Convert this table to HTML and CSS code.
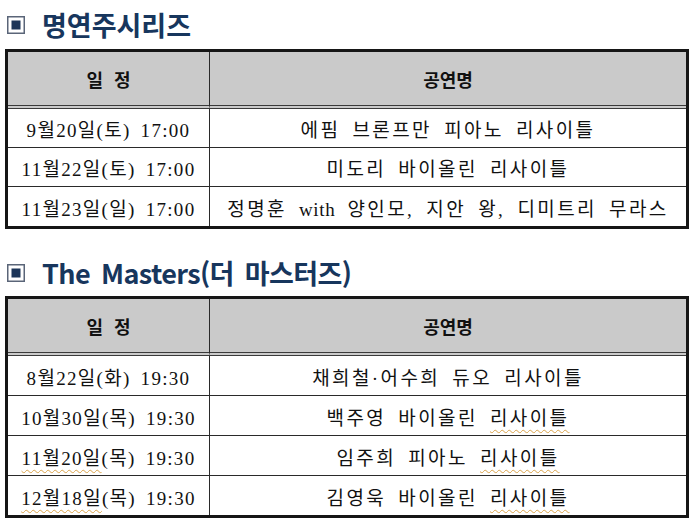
FILE: index.html
```html
<!DOCTYPE html>
<html lang="ko">
<head>
<meta charset="utf-8">
<title>공연 일정</title>
<link rel="stylesheet" href="styles.css">
</head>
<body>
<section class="section">
  <h2 class="title">
    <svg class="title-icon" width="18" height="18" viewBox="0 0 18 18" aria-hidden="true">
      <rect x="0.75" y="0.75" width="16.5" height="16.5" fill="#fff" stroke="#5a6578" stroke-width="1.5"/>
      <rect x="4.5" y="4.5" width="9" height="9" fill="#1d3559"/>
    </svg>
    <span class="title-text">명연주시리즈</span>
  </h2>
  <div class="schedule">
    <div class="cell head first"><span>일 정</span></div>
    <div class="cell head"><span>공연명</span></div>
    <div class="cell first"><span>9월20일(토) 17:00</span></div>
    <div class="cell"><span>에핌 브론프만 피아노 리사이틀</span></div>
    <div class="cell first"><span>11월22일(토) 17:00</span></div>
    <div class="cell"><span>미도리 바이올린 리사이틀</span></div>
    <div class="cell first last"><span>11월23일(일) 17:00</span></div>
    <div class="cell last"><span>정명훈 <span class="latin-word">with</span> 양인모, 지안 왕, 디미트리 무라스</span></div>
  </div>
</section>
<section class="section second">
  <h2 class="title">
    <svg class="title-icon" width="18" height="18" viewBox="0 0 18 18" aria-hidden="true">
      <rect x="0.75" y="0.75" width="16.5" height="16.5" fill="#fff" stroke="#5a6578" stroke-width="1.5"/>
      <rect x="4.5" y="4.5" width="9" height="9" fill="#1d3559"/>
    </svg>
    <span class="title-text latin">The Masters(더 마스터즈)</span>
  </h2>
  <div class="schedule tall">
    <div class="cell head first"><span>일 정</span></div>
    <div class="cell head"><span>공연명</span></div>
    <div class="cell first"><span>8월22일(화) 19:30</span></div>
    <div class="cell"><span>채희철·어수희 듀오 리사이틀</span></div>
    <div class="cell first"><span>10월30일(목) 19:30</span></div>
    <div class="cell"><span>백주영 바이올린 <span class="spell">리사이틀</span></span></div>
    <div class="cell first"><span><span class="spell">11월20일</span>(목) 19:30</span></div>
    <div class="cell"><span>임주희 피아노 <span class="spell">리사이틀</span></span></div>
    <div class="cell first last"><span><span class="spell">12월18일</span>(목) 19:30</span></div>
    <div class="cell last"><span>김영욱 바이올린 <span class="spell">리사이틀</span></span></div>
  </div>
</section>
</body>
</html>
```

FILE: styles.css
```css
* { box-sizing: border-box; }

html, body {
  margin: 0;
  padding: 0;
  background: #ffffff;
}

body {
  width: 700px;
  height: 528px;
  overflow: hidden;
  font-family: "Liberation Serif", "Noto Sans CJK KR", serif;
  color: #111111;
}

.section {
  padding-left: 5px;
}

.second {
  margin-top: 20px;
}

.title {
  margin: 0;
  height: 49px;
  display: flex;
  align-items: center;
  padding-left: 2px;
  padding-bottom: 1px;
  font-family: "Noto Sans CJK KR", "Noto Sans", sans-serif;
  font-weight: 700;
  font-size: 27px;
  color: #17365d;
}

.second .title {
  height: 47px;
}

.title-icon {
  flex: none;
  margin-right: 17px;
  margin-top: 1px;
}

.title-text {
  letter-spacing: 0;
  line-height: 1;
}

.title-text.latin {
  letter-spacing: -0.6px;
  word-spacing: 4px;
}

.schedule {
  width: 684px;
  border: 3px solid #161616;
  display: grid;
  grid-template-columns: 202px 1fr;
}

.cell {
  height: 39px;
  display: flex;
  align-items: center;
  justify-content: center;
  font-size: 19px;
  letter-spacing: 2.4px;
  word-spacing: 5px;
  border-bottom: 1px solid #2a2a2a;
  white-space: nowrap;
  padding-top: 1px;
}

.latin-word {
  letter-spacing: 0.6px;
}

.cell.first {
  letter-spacing: 1.3px;
  word-spacing: 4px;
  border-right: 1px solid #2a2a2a;
}

.tall .cell {
  height: 40px;
}

.cell.last,
.tall .cell.last {
  height: 39px;
  border-bottom: none;
}

.cell.head {
  height: 57px;
  background: #cacaca;
  font-family: "Noto Sans CJK KR", sans-serif;
  font-weight: 700;
  font-size: 18px;
  letter-spacing: 0;
  word-spacing: 6px;
  border-bottom: 4px double #3a3a3a;
}

.tall .cell.head {
  height: 57px;
}

.spell {
  text-decoration: underline wavy #d9a24a;
  text-decoration-thickness: 1px;
  text-underline-offset: 4px;
}
```
